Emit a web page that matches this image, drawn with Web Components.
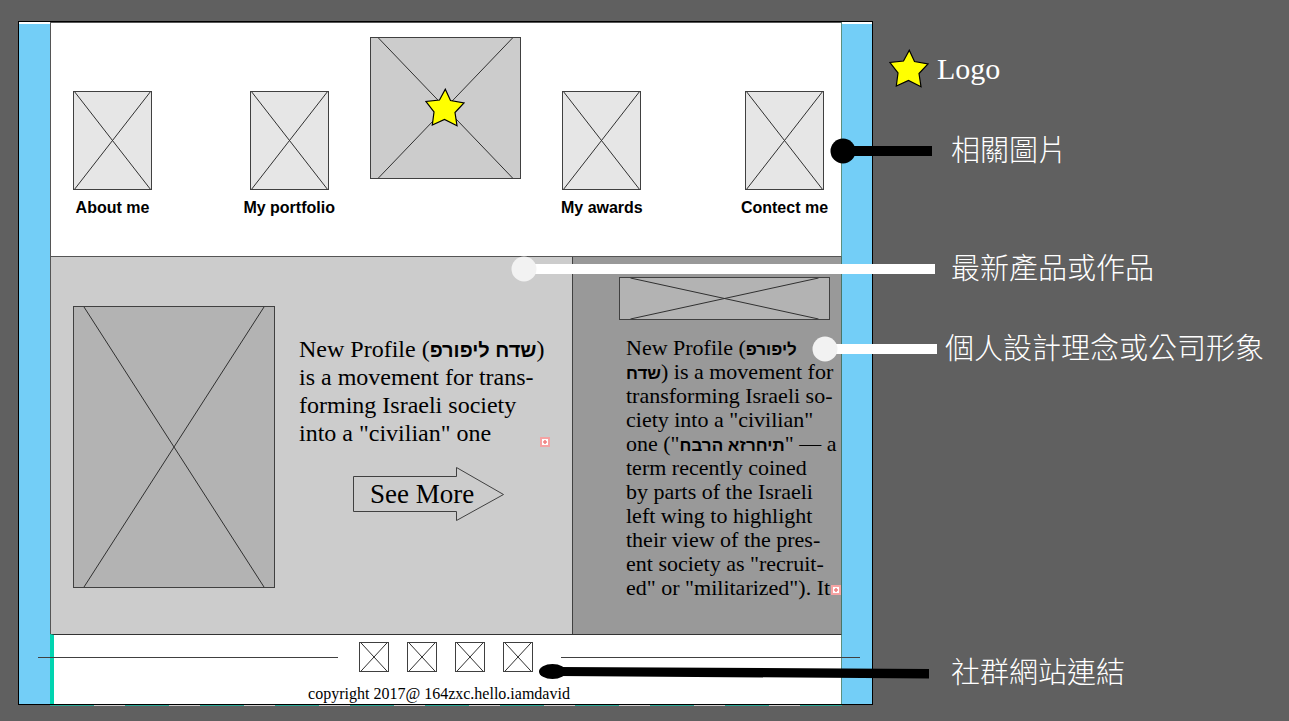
<!DOCTYPE html>
<html lang="zh-Hant">
<head>
<meta charset="utf-8">
<meta name="viewport" content="width=device-width, initial-scale=1">
<title>Portfolio wireframe</title>
<style>
  body { margin: 0; background: #606060; color: #000; font-family: "Liberation Serif", "Noto Sans CJK TC", serif; }
</style>
</head>
<body>
<wire-board></wire-board>

<script>
const define = (name, html, setup) => customElements.define(name, class extends HTMLElement {
  constructor() {
    super();
    const t = document.createElement('template');
    t.innerHTML = html;
    this.attachShadow({ mode: 'open' }).append(t.content.cloneNode(true));
  }
  connectedCallback() { if (setup) setup(this, this.shadowRoot); }
});

/* Placeholder picture: a box with two crossing lines; "inset" is the percentage the lines start in from the sides. */
define('picture-box', `
  <style>
    :host { display: block; position: relative; box-sizing: border-box; border: 1px solid #404040; background: var(--fill, #e6e6e6); }
    svg { display: block; position: absolute; inset: 0; width: 100%; height: 100%; }
    .over { position: absolute; inset: 0; display: flex; align-items: center; justify-content: center; }
  </style>
  <svg viewBox="0 0 100 100" preserveAspectRatio="none" fill="none" stroke="#303030" aria-hidden="true">
    <path vector-effect="non-scaling-stroke"/>
  </svg>
  <div class="over"><slot></slot></div>`,
  (el, root) => {
    const i = Number(el.getAttribute('inset') || 0), j = 100 - i;
    root.querySelector('path').setAttribute('d', `M${i} 0L${j} 100M${j} 0L${i} 100`);
  });

define('logo-star', `
  <style>:host { display: block; width: 40px; height: 40px; } svg { display: block; }</style>
  <svg width="40" height="40" viewBox="0 0 40 40" role="img" aria-label="Star">
    <path d="M20.3 1.2L25.5 12.5L39 15L30 24.5L32 37.7L19.5 31.5L7.3 37L9 24L1 13.5L14.5 12Z" fill="#ff0" stroke="#000" stroke-width="1.2"/>
  </svg>`);

/* Marker for text that runs past its frame. */
define('overset-mark', `
  <style>:host { display: block; width: 10px; height: 10px; } svg { display: block; }</style>
  <svg width="10" height="10" viewBox="0 0 10 10" aria-hidden="true">
    <rect x="1" y="1" width="8" height="8" fill="#fff" stroke="#f5a3a3" stroke-width="2"/>
    <path d="M5 3V7M3 5H7" stroke="#f08080" stroke-width="1.6"/>
  </svg>`);

define('nav-item', `
  <style>
    :host { display: block; padding-top: 54px; }
    a { display: flex; flex-direction: column; align-items: center; gap: 6px; width: 79px; color: inherit; text-decoration: none; }
    picture-box { width: 79px; height: 99px; }
    span { font: bold 16px/24px "Liberation Sans", sans-serif; white-space: nowrap; }
  </style>
  <a href="#"><picture-box inset="1"></picture-box><span><slot></slot></span></a>`);

define('site-header', `
  <style>
    :host { display: block; background: #fff; border: 1px solid #555; border-right-color: #5b8f80; padding: 14px 17px 36px 22px; }
    nav { display: grid; grid-template-columns: 79px 98fr 79px 41fr 151px 42fr 79px 104fr 79px; align-items: start; }
    nav > :nth-child(2) { grid-column: 3; }
    nav > :nth-child(3) { grid-column: 5; }
    nav > :nth-child(4) { grid-column: 7; }
    nav > :nth-child(5) { grid-column: 9; }
    nav > picture-box { height: 142px; --fill: #ccc; }
  </style>
  <nav aria-label="Main">
    <nav-item>About me</nav-item>
    <nav-item>My portfolio</nav-item>
    <picture-box inset="5"><logo-star></logo-star></picture-box>
    <nav-item>My awards</nav-item>
    <nav-item>Contect me</nav-item>
  </nav>`);

define('arrow-link', `
  <style>
    :host { display: block; width: 152px; }
    a { display: block; position: relative; padding-left: 17px; font-size: 27px; line-height: 54px; color: inherit; text-decoration: none; white-space: nowrap; }
    svg { position: absolute; left: 0; top: 0; }
  </style>
  <a href="#">
    <svg width="152" height="54" viewBox="0 0 152 54" fill="none" stroke="#404040" aria-hidden="true">
      <path d="M.5 9.5H103.5V.5L150.5 27.5L103.5 53.5V44.5H.5Z"/>
    </svg>
    <slot></slot>
  </a>`);

define('feature-panel', `
  <style>
    :host { display: flex; align-items: flex-start; gap: 24px; background: #ccc; padding: 49px 22px 46px 22px; border-left: 1px solid #555; }
    picture-box { flex: none; width: 202px; height: 282px; --fill: #b3b3b3; }
    .copy { position: relative; flex: 1; min-width: 0; padding-top: 29px; }
    p { margin: 0 0 20px; font-size: 24px; line-height: 28px; white-space: nowrap; }
    bdo { font: bold 20px/20px "Liberation Sans", sans-serif; }
    arrow-link { margin-left: 54px; }
    overset-mark { position: absolute; right: 0; top: 131px; }
  </style>
  <picture-box inset="5"></picture-box>
  <div class="copy">
    <p>New Profile (<bdo dir="ltr">פרופיל חדש</bdo>)<br>is a movement for trans-<br>forming Israeli society<br>into a "civilian" one</p>
    <arrow-link>See More</arrow-link>
    <overset-mark></overset-mark>
  </div>`);

define('about-panel', `
  <style>
    :host { display: block; position: relative; background: #999; padding: 20px 11px 34px 46px; border-left: 1px solid #404040; border-right: 1px solid #4a7566; }
    picture-box { height: 43px; --fill: #b3b3b3; }
    p { margin: 16px 0 0 7px; font-size: 22px; line-height: 24px; white-space: nowrap; }
    bdo { font: bold 17px/17px "Liberation Sans", sans-serif; }
    overset-mark { position: absolute; right: 0; bottom: 39px; }
  </style>
  <picture-box inset="5"></picture-box>
  <p>New Profile (<bdo dir="ltr">פרופיל<br>חדש</bdo>) is a movement for<br>transforming Israeli so-<br>ciety into a "civilian"<br>one ("<bdo dir="ltr">חברה אזרחית</bdo>" — a<br>term recently coined<br>by parts of the Israeli<br>left wing to highlight<br>their view of the pres-<br>ent society as "recruit-<br>ed" or "militarized"). It</p>
  <overset-mark></overset-mark>`);

define('site-footer', `
  <style>
    :host { display: block; background: #fff; border-top: 1px solid #333; border-left: 4px solid #00d4b0; border-right: 1px solid #5b8f80; padding-top: 7px; }
    .row { display: flex; align-items: center; margin: 0 -19px 0 -16px; }
    hr { flex: 1; margin: 0; border: 0; border-top: 1px solid #404040; }
    ul { display: flex; gap: 18px; margin: 0 28px 0 21px; padding: 0; list-style: none; }
    a { display: block; }
    picture-box { width: 30px; height: 30px; --fill: #fff; }
    small { display: block; margin-top: 12px; padding-right: 17px; font-size: 16px; line-height: 20px; text-align: center; }
  </style>
  <div class="row">
    <hr>
    <ul>
      <li><a href="#" aria-label="Social link 1"><picture-box inset="4"></picture-box></a></li>
      <li><a href="#" aria-label="Social link 2"><picture-box inset="4"></picture-box></a></li>
      <li><a href="#" aria-label="Social link 3"><picture-box inset="4"></picture-box></a></li>
      <li><a href="#" aria-label="Social link 4"><picture-box inset="4"></picture-box></a></li>
    </ul>
    <hr>
  </div>
  <small>copyright 2017@ 164zxc.hello.iamdavid</small>`);

define('site-frame', `
  <style>
    :host { display: block; }
    .frame { display: grid; grid-template-columns: 31px minmax(0, 1fr) 30px; border: 1px solid #000; background: #73cef7; }
    .rail { border-top: 2px solid #fff; }
    .body { display: grid; grid-template-columns: minmax(0, 522fr) minmax(0, 270fr); }
    .edge { height: 1px; background: repeating-linear-gradient(90deg, #2aa593 0 44px, #ccc 44px 75px); margin: 0 31px 0 32px; }
  </style>
  <div class="frame">
    <div class="rail"></div>
    <main>
      <site-header></site-header>
      <div class="body"><feature-panel></feature-panel><about-panel></about-panel></div>
      <site-footer></site-footer>
    </main>
    <div class="rail"></div>
  </div>
  <div class="edge"></div>`);

/* Note beside the frame; its pointer reaches back over the part it describes. */
define('call-out', `
  <style>
    :host { display: block; position: relative; padding-left: var(--indent, 78px); color: #fff; font-size: 29px; line-height: 40px; font-weight: 300; white-space: nowrap; }
    svg { position: absolute; top: 7px; left: calc(0px - var(--reach)); overflow: visible; }
  </style>
  <svg height="26" aria-hidden="true"></svg>
  <slot></slot>`,
  (el, root) => {
    const reach = Number(el.getAttribute('reach')), len = Number(el.getAttribute('length'));
    el.style.setProperty('--reach', reach + 'px');
    const svg = root.querySelector('svg');
    svg.setAttribute('width', len);
    const tone = el.getAttribute('tone');
    svg.innerHTML = tone === 'taper'
      ? `<path d="M20 7L${len} 9V18.500L20 16Z"/><ellipse cx="13.500" cy="11.500" rx="13.500" ry="7.500"/>`
      : tone === 'light'
      ? `<path d="M13 8H${len}V18H13Z" fill="#fff"/><circle cx="13" cy="13" r="12.500" fill="#f2f2f2"/>`
      : `<path d="M13 8H${len}V18H13Z"/><circle cx="13" cy="13" r="12.500"/>`;
  });

define('wire-board', `
  <style>
    :host { display: grid; grid-template-columns: minmax(0, 855fr) minmax(0, 416fr); align-items: start; padding: 21px 0 14px 18px; }
    aside { padding-top: 28px; }
    .legend { display: flex; align-items: center; gap: 8px; padding-left: 16px; color: #fff; font-size: 30px; line-height: 40px; }
    .images { margin-top: 42px; }
    .latest { margin-top: 78px; }
    .idea { margin-top: 40px; --indent: 72px; }
    .social { margin-top: 284px; }
  </style>
  <site-frame></site-frame>
  <aside>
    <div class="legend"><logo-star></logo-star><span>Logo</span></div>
    <call-out class="images" reach="43" length="102">相關圖片</call-out>
    <call-out class="latest" tone="light" reach="362" length="424">最新產品或作品</call-out>
    <call-out class="idea" tone="light" reach="61" length="125">個人設計理念或公司形象</call-out>
    <call-out class="social" tone="taper" reach="334" length="390">社群網站連結</call-out>
  </aside>`);
</script>
</body>
</html>
